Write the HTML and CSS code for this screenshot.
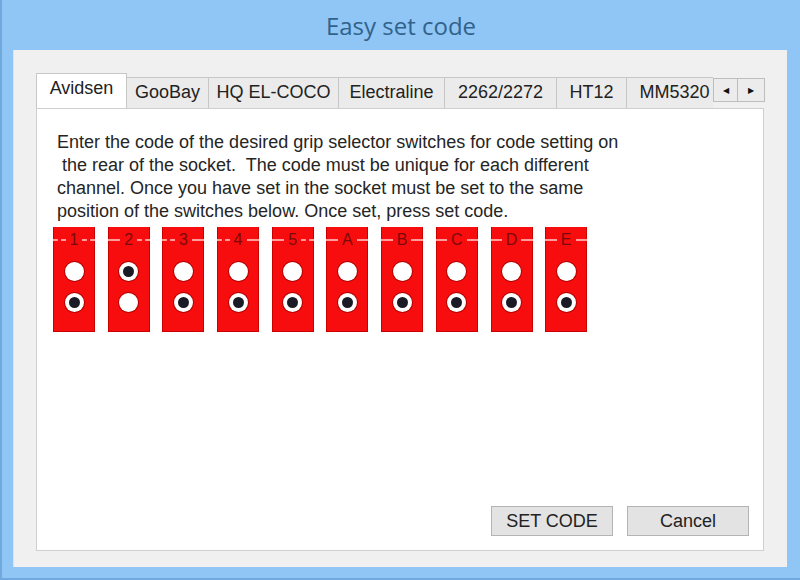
FILE: index.html
```html
<!DOCTYPE html>
<html>
<head>
  <title>Easy set code</title>
  <link rel="stylesheet" href="styles.css">
</head>
<body>
  <div class="window">
    <div class="title-bar">Easy set code</div>
    <div class="client">
      <div class="tabs">
        <div class="tab-strip">
          <div class="tab active" style="width: 91px">Avidsen</div>
          <div class="tab" style="width: 82px">GooBay</div>
          <div class="tab" style="width: 130px">HQ EL-COCO</div>
          <div class="tab" style="width: 106px">Electraline</div>
          <div class="tab" style="width: 112px">2262/2272</div>
          <div class="tab" style="width: 70px">HT12</div>
          <div class="tab" style="width: 96px">MM5320</div>
        </div>
        <div class="tab-arrows">
          <div class="arrow-btn">&#9664;</div>
          <div class="arrow-btn">&#9654;</div>
        </div>
      </div>
      <div class="panel">
        <p class="intro">
          Enter the code of the desired grip selector switches for code setting on<br>
          &nbsp;the rear of the socket.&nbsp; The code must be unique for each different<br>
          channel. Once you have set in the socket must be set to the same<br>
          position of the switches below. Once set, press set code.
        </p>
        <div class="switches" id="switches"></div>
        <div class="buttons">
          <button class="btn">SET CODE</button>
          <button class="btn">Cancel</button>
        </div>
      </div>
    </div>
  </div>
<script>
  var labels = ["1", "2", "3", "4", "5", "A", "B", "C", "D", "E"];
  var row = document.getElementById("switches");
  labels.forEach(function (name, i) {
    var up = (i === 1);
    var sw = document.createElement("div");
    sw.className = "switch";
    sw.innerHTML =
      '<div class="sw-head"><span>' + name + '</span></div>' +
      '<div class="hole ' + (up ? 'pin' : '') + '"></div>' +
      '<div class="hole ' + (up ? '' : 'pin') + '"></div>';
    row.appendChild(sw);
  });
</script>
</body>
</html>
```

FILE: styles.css
```css
body {
  margin: 0;
  background-color: #8fc6f5;
  font-family: "Liberation Sans", Arial, sans-serif;
}
.window {
  height: 578px;
  border-left: 2px solid #6fa9dd;
  border-bottom: 2px solid #6fa9dd;
}
.title-bar {
  height: 50px;
  display: flex;
  justify-content: center;
  align-items: center;
  font-family: "Open Sans", "Noto Sans", sans-serif;
  font-size: 24px;
  color: #32628a;
  box-sizing: border-box;
}
.client {
  margin: 0 13px 0 11px;
  height: 517px;
  background-color: #f0f0f0;
  border-left: 1px solid #d4e6f5;
  padding: 23px 0 0 22px;
  box-sizing: border-box;
}
.tabs {
  width: 728px;
  height: 35px;
  display: flex;
  align-items: flex-end;
  position: relative;
  z-index: 1;
}
.tab-strip {
  display: flex;
  align-items: flex-end;
  width: 677px;
  overflow: hidden;
  flex: none;
}
.tab {
  flex: none;
  height: 31px;
  box-sizing: border-box;
  border: 1px solid #c7c7c7;
  border-bottom: none;
  border-left: none;
  background-color: #ebebeb;
  color: #222;
  font-size: 18px;
  display: flex;
  align-items: center;
  justify-content: center;
  padding-bottom: 2px;
  white-space: nowrap;
}
.tab.active {
  height: 36px;
  margin-bottom: -1px;
  background-color: #fff;
  border-left: 1px solid #c7c7c7;
  padding-bottom: 6px;
}
.tab-arrows {
  display: flex;
  align-self: flex-start;
  margin-top: 5px;
}
.arrow-btn {
  width: 25px;
  height: 24px;
  box-sizing: border-box;
  border: 1px solid #bdbdbd;
  background-color: #ececec;
  font-size: 8px;
  color: #111;
  display: flex;
  align-items: center;
  justify-content: center;
}
.arrow-btn + .arrow-btn {
  width: 27px;
  border-left: none;
}
.panel {
  width: 728px;
  height: 443px;
  box-sizing: border-box;
  background-color: #fff;
  border: 1px solid #cfcfcf;
  padding: 22px 0 0 16px;
  display: flex;
  flex-direction: column;
}
.intro {
  margin: 0 0 0 4px;
  font-size: 18px;
  line-height: 23px;
  color: #252525;
}
.switches {
  display: flex;
  gap: 12.7px;
  margin-top: 4px;
}
.switch {
  width: 42px;
  height: 105px;
  background-color: #f70d0d;
  box-shadow: inset 1px 0 0 #c90000, inset -1px 0 0 #c90000, inset 0 -1px 0 #c90000;
  display: flex;
  flex-direction: column;
  align-items: center;
}
.sw-head {
  width: 100%;
  height: 22px;
  display: flex;
  align-items: center;
  justify-content: center;
  margin-bottom: 13px;
}
.sw-head span {
  font-size: 16px;
  color: #7a0a0a;
  padding: 0 4px;
  margin-top: 4px;
}
.sw-head:before,
.sw-head:after {
  content: "";
  flex: 1;
  border-top: 2px dashed #ff9c9c;
  margin-top: 4px;
}
.hole {
  width: 19px;
  height: 19px;
  border-radius: 50%;
  background-color: #fff;
  box-shadow: 0 0 0 1px #b00000;
  margin-bottom: 12px;
  display: flex;
  align-items: center;
  justify-content: center;
}
.hole.pin:before {
  content: "";
  width: 11px;
  height: 11px;
  border-radius: 50%;
  background-color: #1b1b26;
}
.buttons {
  margin-top: auto;
  margin-bottom: 14px;
  display: flex;
  justify-content: flex-end;
  gap: 14px;
  padding-right: 14px;
}
.btn {
  width: 122px;
  height: 30px;
  font-family: "Liberation Sans", Arial, sans-serif;
  font-size: 18px;
  color: #222;
  background-color: #e3e3e3;
  border: 1px solid #b4b4b4;
  padding: 0;
}
```
